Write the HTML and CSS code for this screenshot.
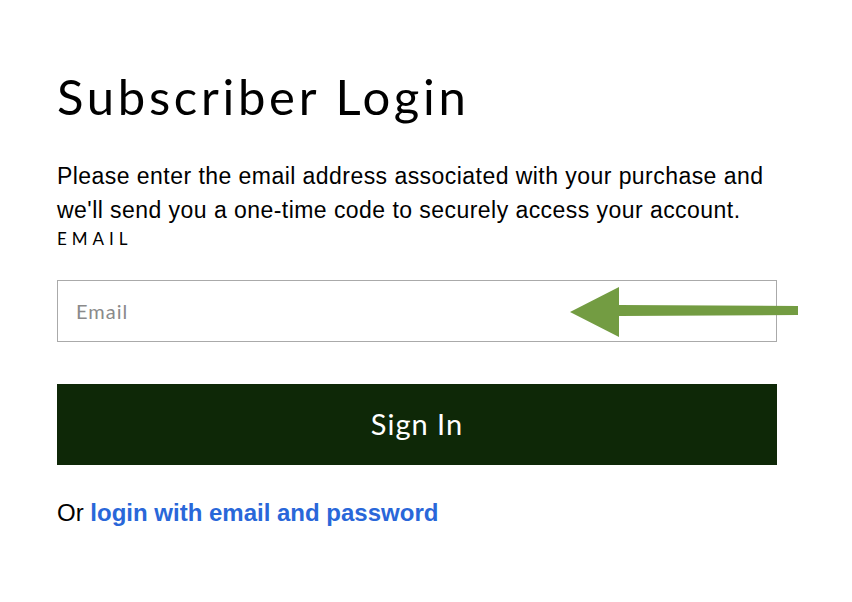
FILE: index.html
```html
<!DOCTYPE html>
<html lang="en">
<head>
<meta charset="UTF-8">
<meta name="viewport" content="width=device-width, initial-scale=1.0">
<title>Subscriber Login</title>
<link rel="stylesheet" href="styles.css">
</head>
<body>
  <div class="login">
    <h1>Subscriber Login</h1>
    <p class="intro">Please enter the email address associated with your purchase and we'll send you a one-time code to securely access your account.</p>

    <label class="field-label" for="email">EMAIL</label>
    <div class="field">
      <input type="email" id="email" placeholder="Email">
      <!-- annotation arrow -->
      <svg class="arrow" width="230" height="52" viewBox="0 0 230 52" aria-hidden="true">
        <path d="M0 25 L49 0 L49 18 L228 19 L228 28 L49 29 L49 50 Z" fill="#739c42"/>
      </svg>
    </div>

    <button class="btn" type="button">Sign In</button>

    <p class="alt">Or <a href="#">login with email and password</a></p>
  </div>
</body>
</html>
```

FILE: styles.css
```css
body {
  margin: 0;
  padding: 0;
  background: #fff;
  font-family: 'Liberation Sans', Arial, sans-serif;
  color: #000;
}

.login {
  width: 720px;
  padding: 65px 0 0 57px;
}

h1 {
  margin: 0 0 32px 0;
  font-family: 'Lato', sans-serif;
  font-weight: 400;
  font-size: 49px;
  line-height: 62px;
  letter-spacing: 3.7px;
}

.intro {
  margin: 0;
  font-size: 23px;
  line-height: 34px;
  letter-spacing: 0.45px;
}

.field-label {
  display: block;
  margin-top: 2px;
  font-family: 'Lato', sans-serif;
  font-size: 17px;
  letter-spacing: 5px;
  line-height: 20px;
}

.field {
  position: relative;
  margin-top: 31px;
}

.field input {
  display: block;
  box-sizing: border-box;
  width: 720px;
  height: 62px;
  margin: 0;
  padding: 0 18px;
  border: 1px solid #aaa;
  border-radius: 0;
  font-family: 'Lato', sans-serif;
  font-size: 20px;
  letter-spacing: 1px;
  color: #333;
  outline: none;
}

.field input::placeholder {
  color: #8a8a8a;
}

.arrow {
  position: absolute;
  left: 513px;
  top: 7px;
}

.btn {
  display: block;
  width: 720px;
  height: 81px;
  margin-top: 42px;
  padding: 0 0 3px 0;
  border: 0;
  background-color: #0e2807;
  color: #fff;
  font-family: 'Lato', sans-serif;
  font-size: 29px;
  letter-spacing: 1px;
  cursor: pointer;
}

.alt {
  margin: 34px 0 0 0;
  font-size: 24px;
  line-height: 28px;
}

.alt a {
  color: #2967d9;
  font-weight: 700;
  text-decoration: none;
}
```
